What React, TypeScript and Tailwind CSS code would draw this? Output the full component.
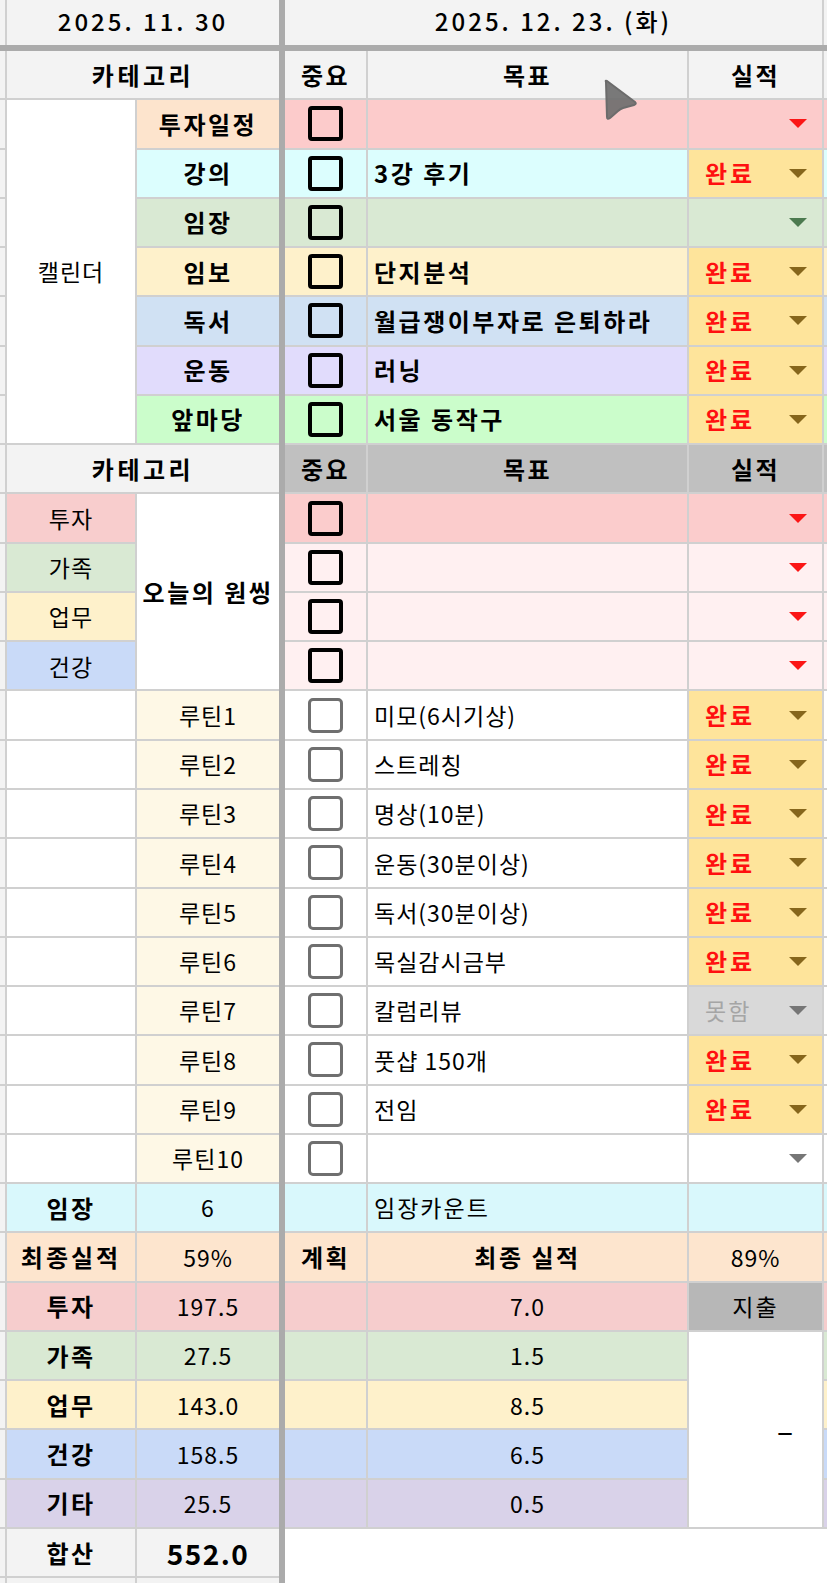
import React from "react";

type Tone = "red" | "gold" | "green" | "gray";

const caretFill: Record<Tone, string> = {
  red: "#fb1616",
  gold: "#86661c",
  green: "#4c7a4f",
  gray: "#767676",
};

const RB = "border-r-2 border-b-2 border-[#d0d0d0]";
const BB = "border-b-2 border-[#d0d0d0]";
const BOLD = "font-bold text-[24px] tracking-[2.5px]";

function Caret({ tone }: { tone: Tone }) {
  return (
    <svg width="18" height="9" viewBox="0 0 18 9" className="shrink-0">
      <polygon points="0,0 18,0 9,9" fill={caretFill[tone]} />
    </svg>
  );
}

function Box({ soft }: { soft?: boolean }) {
  return (
    <div
      className={
        soft
          ? "w-[35px] h-[35px] rounded-[5px] border-[3.5px] border-[#6f6f6f] bg-white"
          : "w-[35px] h-[35px] rounded-[4px] border-[4px] border-black"
      }
    />
  );
}

function Strip({ last }: { last?: boolean }) {
  return <div className={last ? "bg-[#f3f3f3] border-r-2 border-[#d0d0d0]" : `bg-[#f3f3f3] ${RB}`} />;
}

function Edge({ bg }: { bg: string }) {
  return <div className={`${bg} ${BB}`} />;
}

function Status({ bg, label, tone, muted }: { bg: string; label?: string; tone: Tone; muted?: boolean }) {
  return (
    <div className={`${bg} ${RB} flex items-center ${label ? "justify-between" : "justify-end"} pl-[16px] pr-[15px]`}>
      {label && (
        <span className={muted ? "text-[#a5a5a5] tracking-[2px]" : "font-bold text-[24px] tracking-[3px] text-[#ff1010]"}>
          {label}
        </span>
      )}
      <Caret tone={tone} />
    </div>
  );
}

const calendar = [
  { name: "투자일정", bg: "bg-[#fde4cd]", row: "bg-[#fccbcb]", goal: "", status: "bg-[#fccbcb]", tone: "red" as Tone, done: false },
  { name: "강의", bg: "bg-[#dcfefe]", row: "bg-[#dcfefe]", goal: "3강 후기", status: "bg-[#fee49b]", tone: "gold" as Tone, done: true },
  { name: "임장", bg: "bg-[#d9e9d3]", row: "bg-[#d9e9d3]", goal: "", status: "bg-[#d9e9d3]", tone: "green" as Tone, done: false },
  { name: "임보", bg: "bg-[#fef1cb]", row: "bg-[#fef1cb]", goal: "단지분석", status: "bg-[#fee49b]", tone: "gold" as Tone, done: true },
  { name: "독서", bg: "bg-[#d0e1f3]", row: "bg-[#d0e1f3]", goal: "월급쟁이부자로 은퇴하라", status: "bg-[#fee49b]", tone: "gold" as Tone, done: true },
  { name: "운동", bg: "bg-[#e1dcfc]", row: "bg-[#e1dcfc]", goal: "러닝", status: "bg-[#fee49b]", tone: "gold" as Tone, done: true },
  { name: "앞마당", bg: "bg-[#cbfdcb]", row: "bg-[#cbfdcb]", goal: "서울 동작구", status: "bg-[#fee49b]", tone: "gold" as Tone, done: true },
];

const oneThing = [
  { name: "투자", bg: "bg-[#f8cdcd]", row: "bg-[#fbcccc]" },
  { name: "가족", bg: "bg-[#d9e9d3]", row: "bg-[#fff0f1]" },
  { name: "업무", bg: "bg-[#fef1cb]", row: "bg-[#fff0f1]" },
  { name: "건강", bg: "bg-[#c9daf8]", row: "bg-[#fff0f1]" },
];

const routines = [
  { goal: "미모(6시기상)", state: "done" },
  { goal: "스트레칭", state: "done" },
  { goal: "명상(10분)", state: "done" },
  { goal: "운동(30분이상)", state: "done" },
  { goal: "독서(30분이상)", state: "done" },
  { goal: "목실감시금부", state: "done" },
  { goal: "칼럼리뷰", state: "miss" },
  { goal: "풋샵 150개", state: "done" },
  { goal: "전임", state: "done" },
  { goal: "", state: "none" },
];

const totals = [
  { name: "투자", bg: "bg-[#f6cdcd]", left: "197.5", right: "7.0" },
  { name: "가족", bg: "bg-[#d9e9d3]", left: "27.5", right: "1.5" },
  { name: "업무", bg: "bg-[#fef1cb]", left: "143.0", right: "8.5" },
  { name: "건강", bg: "bg-[#c9daf8]", left: "158.5", right: "6.5" },
  { name: "기타", bg: "bg-[#d9d2e9]", left: "25.5", right: "0.5" },
];

export default function App() {
  return (
    <div className="relative w-[827px] h-[1583px] bg-white text-black text-[23px] tracking-[1px] font-['Noto_Sans_CJK_KR','Noto_Sans',sans-serif] overflow-hidden">
      <div className="grid grid-cols-[7px_130px_142px_6px_83px_321px_135px_3px] grid-rows-[45px_6px_repeat(31,49.27px)_1fr] h-full">
        {/* divider + thick rule */}
        <div className="col-start-4 row-start-1 row-end-35 bg-[#ababab]" />
        <div className="col-start-1 col-end-9 row-start-2 bg-[#ababab]" />

        {/* dates */}
        <div className="bg-[#f3f3f3] border-r-2 border-[#d0d0d0]" />
        <div className="col-span-2 bg-[#f3f3f3] flex items-center justify-center pb-[4px] text-[24px] font-medium tracking-[3px]">
          2025. 11. 30
        </div>
        <div className="col-span-3 bg-[#f3f3f3] border-r-2 border-[#d0d0d0] flex items-center justify-center pb-[4px] text-[24px] font-medium tracking-[3px]">
          2025. 12. 23. (화)
        </div>
        <div className="bg-[#f3f3f3]" />

        {/* header */}
        <Strip />
        <div className={`col-span-2 bg-[#f3f3f3] ${BB} flex items-center justify-center font-bold text-[24px] tracking-[3.5px]`}>카테고리</div>
        <div className={`bg-[#f3f3f3] ${RB} flex items-center justify-center ${BOLD}`}>중요</div>
        <div className={`bg-[#f3f3f3] ${RB} flex items-center justify-center ${BOLD}`}>목표</div>
        <div className={`bg-[#f3f3f3] ${RB} flex items-center justify-center ${BOLD}`}>실적</div>
        <Edge bg="bg-[#f3f3f3]" />

        {/* calendar */}
        {calendar.map((c, i) => (
          <React.Fragment key={c.name}>
            <Strip />
            {i === 0 && <div className={`row-span-7 bg-white ${RB} flex items-center justify-center`}>캘린더</div>}
            <div className={`${c.bg} ${BB} flex items-center justify-center ${BOLD}`}>{c.name}</div>
            <div className={`${c.row} ${RB} flex items-center justify-center`}>
              <Box />
            </div>
            <div className={`${c.row} ${RB} flex items-center pl-[6px] whitespace-nowrap ${BOLD}`}>{c.goal}</div>
            <Status bg={c.status} label={c.done ? "완료" : undefined} tone={c.tone} />
            <Edge bg={c.row} />
          </React.Fragment>
        ))}

        {/* second header */}
        <Strip />
        <div className={`col-span-2 bg-[#f3f3f3] ${BB} flex items-center justify-center font-bold text-[24px] tracking-[3.5px]`}>카테고리</div>
        <div className={`bg-[#c0c0c0] ${RB} flex items-center justify-center ${BOLD}`}>중요</div>
        <div className={`bg-[#c0c0c0] ${RB} flex items-center justify-center ${BOLD}`}>목표</div>
        <div className={`bg-[#c0c0c0] ${RB} flex items-center justify-center ${BOLD}`}>실적</div>
        <Edge bg="bg-[#c0c0c0]" />

        {/* one thing */}
        {oneThing.map((o, i) => (
          <React.Fragment key={o.name}>
            <Strip />
            <div className={`${o.bg} ${RB} flex items-center justify-center`}>{o.name}</div>
            {i === 0 && <div className={`row-span-4 bg-white ${BB} flex items-center justify-center ${BOLD}`}>오늘의 원씽</div>}
            <div className={`${o.row} ${RB} flex items-center justify-center`}>
              <Box />
            </div>
            <div className={`${o.row} ${RB}`} />
            <Status bg={o.row} tone="red" />
            <Edge bg={o.row} />
          </React.Fragment>
        ))}

        {/* routines */}
        {routines.map((r, i) => (
          <React.Fragment key={i}>
            <Strip />
            <div className={`bg-white ${RB}`} />
            <div className={`bg-[#fef8e6] ${BB} flex items-center justify-center`}>루틴{i + 1}</div>
            <div className={`bg-white ${RB} flex items-center justify-center`}>
              <Box soft />
            </div>
            <div className={`bg-white ${RB} flex items-center pl-[6px] whitespace-nowrap`}>{r.goal}</div>
            {r.state === "done" && <Status bg="bg-[#fee49b]" label="완료" tone="gold" />}
            {r.state === "miss" && <Status bg="bg-[#d9d9d9]" label="못함" tone="gray" muted />}
            {r.state === "none" && <Status bg="bg-white" tone="gray" />}
            <Edge bg="bg-white" />
          </React.Fragment>
        ))}

        {/* 임장 count */}
        <Strip />
        <div className={`bg-[#d9f8fc] ${RB} flex items-center justify-center ${BOLD}`}>임장</div>
        <div className={`bg-[#d9f8fc] ${BB} flex items-center justify-center`}>6</div>
        <div className={`bg-[#d9f8fc] ${RB}`} />
        <div className={`bg-[#d9f8fc] ${RB} flex items-center pl-[6px] tracking-[2px]`}>임장카운트</div>
        <div className={`bg-[#d9f8fc] ${RB}`} />
        <Edge bg="bg-[#d9f8fc]" />

        {/* final result */}
        <Strip />
        <div className={`bg-[#fde5ce] ${RB} flex items-center justify-center font-bold text-[24px] tracking-[3px]`}>최종실적</div>
        <div className={`bg-[#fde5ce] ${BB} flex items-center justify-center`}>59%</div>
        <div className={`bg-[#fde5ce] ${RB} flex items-center justify-center ${BOLD}`}>계획</div>
        <div className={`bg-[#fde5ce] ${RB} flex items-center justify-center ${BOLD}`}>최종 실적</div>
        <div className={`bg-[#fde5ce] ${RB} flex items-center justify-center`}>89%</div>
        <Edge bg="bg-[#fde5ce]" />

        {totals.map((t, i) => (
          <React.Fragment key={t.name}>
            <Strip />
            <div className={`${t.bg} ${RB} flex items-center justify-center ${BOLD}`}>{t.name}</div>
            <div className={`${t.bg} ${BB} flex items-center justify-center`}>{t.left}</div>
            <div className={`${t.bg} ${RB}`} />
            <div className={`${t.bg} ${RB} flex items-center justify-center`}>{t.right}</div>
            {i === 0 && <div className={`bg-[#b7b7b7] ${RB} flex items-center justify-center tracking-[2px]`}>지출</div>}
            {i === 1 && (
              <div className={`row-span-4 bg-white ${RB} flex items-center justify-end pr-[28px] text-[30px]`}>–</div>
            )}
            <Edge bg={t.bg} />
          </React.Fragment>
        ))}

        {/* sum */}
        <Strip />
        <div className={`bg-[#f3f3f3] ${RB} flex items-center justify-center ${BOLD}`}>합산</div>
        <div className={`bg-[#f3f3f3] ${BB} flex items-center justify-center font-bold text-[28px] tracking-[1.5px]`}>552.0</div>
        <div className="col-span-4 bg-white" />

        <Strip last />
        <div className="bg-[#f3f3f3] border-r-2 border-[#d0d0d0]" />
        <div className="bg-[#f3f3f3]" />
        <div className="col-span-4 bg-white" />
      </div>

      {/* pointer */}
      <svg className="absolute left-[602px] top-[79px]" width="38" height="42" viewBox="0 0 38 42">
        <path
          d="M4 3 Q3 1 5 2 L33 23 Q35 25 32 26 L21 29 Q18 30 16 32 L8 39 Q5 41 5 38 Z"
          fill="#6c6c6c"
          fillOpacity="0.9"
          stroke="#6c6c6c"
          strokeWidth="2"
          strokeLinejoin="round"
        />
      </svg>
    </div>
  );
}
